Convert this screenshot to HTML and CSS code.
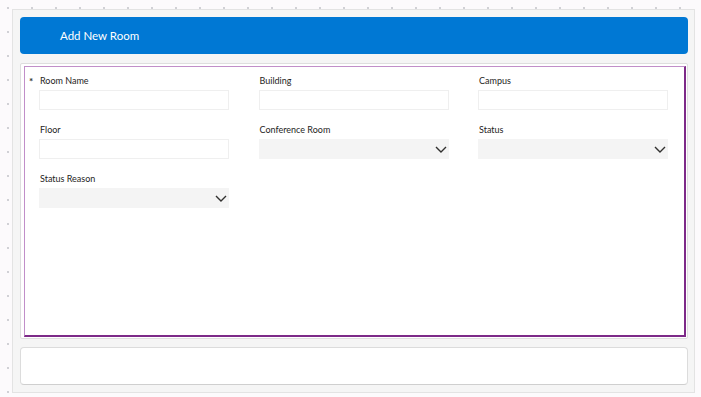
FILE: index.html
```html
<!DOCTYPE html>
<html>
<head>
<meta charset="utf-8">
<link rel="stylesheet" href="styles.css">
</head>
<body>
<div class="panel">
  <div class="header">Add New Room</div>
  <div class="card">
    <div class="form">
      <div class="grid">
        <div class="field">
          <div class="label"><span class="req">*</span>Room Name</div>
          <div class="input"></div>
        </div>
        <div class="field">
          <div class="label">Building</div>
          <div class="input"></div>
        </div>
        <div class="field">
          <div class="label">Campus</div>
          <div class="input"></div>
        </div>
        <div class="field">
          <div class="label">Floor</div>
          <div class="input"></div>
        </div>
        <div class="field">
          <div class="label">Conference Room</div>
          <div class="select"><svg class="chev" width="12" height="7" viewBox="0 0 12 7"><path d="M1 1 L6 6 L11 1" fill="none" stroke="#323130" stroke-width="1.4"/></svg></div>
        </div>
        <div class="field">
          <div class="label">Status</div>
          <div class="select"><svg class="chev" width="12" height="7" viewBox="0 0 12 7"><path d="M1 1 L6 6 L11 1" fill="none" stroke="#323130" stroke-width="1.4"/></svg></div>
        </div>
        <div class="field">
          <div class="label">Status Reason</div>
          <div class="select"><svg class="chev" width="12" height="7" viewBox="0 0 12 7"><path d="M1 1 L6 6 L11 1" fill="none" stroke="#323130" stroke-width="1.4"/></svg></div>
        </div>
      </div>
    </div>
  </div>
  <div class="footer"></div>
</div>
</body>
</html>
```
FILE: styles.css
```css
html, body {
  margin: 0;
  padding: 0;
}
body {
  width: 701px;
  height: 397px;
  overflow: hidden;
  background-color: #fcfafc;
  background-image: radial-gradient(circle, #cfcfd4 0.7px, transparent 1.1px);
  background-size: 24px 24px;
  background-position: -4px -4px;
  font-family: "Lato", "Noto Sans", sans-serif;
  color: #323130;
}
.panel {
  box-sizing: border-box;
  margin: 9px 0 0 12px;
  width: 683px;
  height: 384px;
  background: #f5f5f5;
  border: 1px solid #e3e3e3;
  padding: 7px 6px 7px 7px;
  display: flex;
  flex-direction: column;
}
.header {
  height: 37px;
  background: #0078d4;
  border-radius: 4px;
  color: #fff;
  font-size: 11.5px;
  line-height: 37px;
  padding-left: 40px;
  flex: none;
}
.card {
  margin-top: 9px;
  height: 276px;
  box-sizing: border-box;
  background: #fff;
  border: 1px solid #dedede;
  border-radius: 2px;
  padding: 2px 1px 1px 3px;
  flex: none;
}
.form {
  box-sizing: border-box;
  height: 100%;
  border-top: 1px solid #c18fc9;
  border-left: 1px solid #c18fc9;
  border-right: 2px solid #7d2a88;
  border-bottom: 2px solid #7d2a88;
  padding: 7px 0 0 14px;
}
.grid {
  display: grid;
  grid-template-columns: 190px 190px 190px;
  column-gap: 29.5px;
  row-gap: 13px;
}
.field {
  display: flex;
  flex-direction: column;
}
.label {
  position: relative;
  font-size: 9px;
  line-height: 14px;
  height: 14px;
  margin-bottom: 2px;
  padding-left: 1px;
  color: #252423;
}
.req {
  position: absolute;
  left: -10px;
  top: 0;
  font-size: 10px;
  font-weight: bold;
  color: #323130;
}
.input {
  height: 20px;
  box-sizing: border-box;
  border: 1px solid #efefef;
  background: #fff;
}
.select {
  height: 20px;
  box-sizing: border-box;
  background: #f4f4f4;
  display: flex;
  align-items: center;
  justify-content: flex-end;
  padding-right: 2px;
}
.chev {
  display: block;
}
.footer {
  margin-top: 8px;
  height: 38px;
  box-sizing: border-box;
  background: #fff;
  border: 1px solid #dcdcdc;
  border-bottom-color: #cfcfcf;
  border-radius: 4px;
  flex: none;
}
```
